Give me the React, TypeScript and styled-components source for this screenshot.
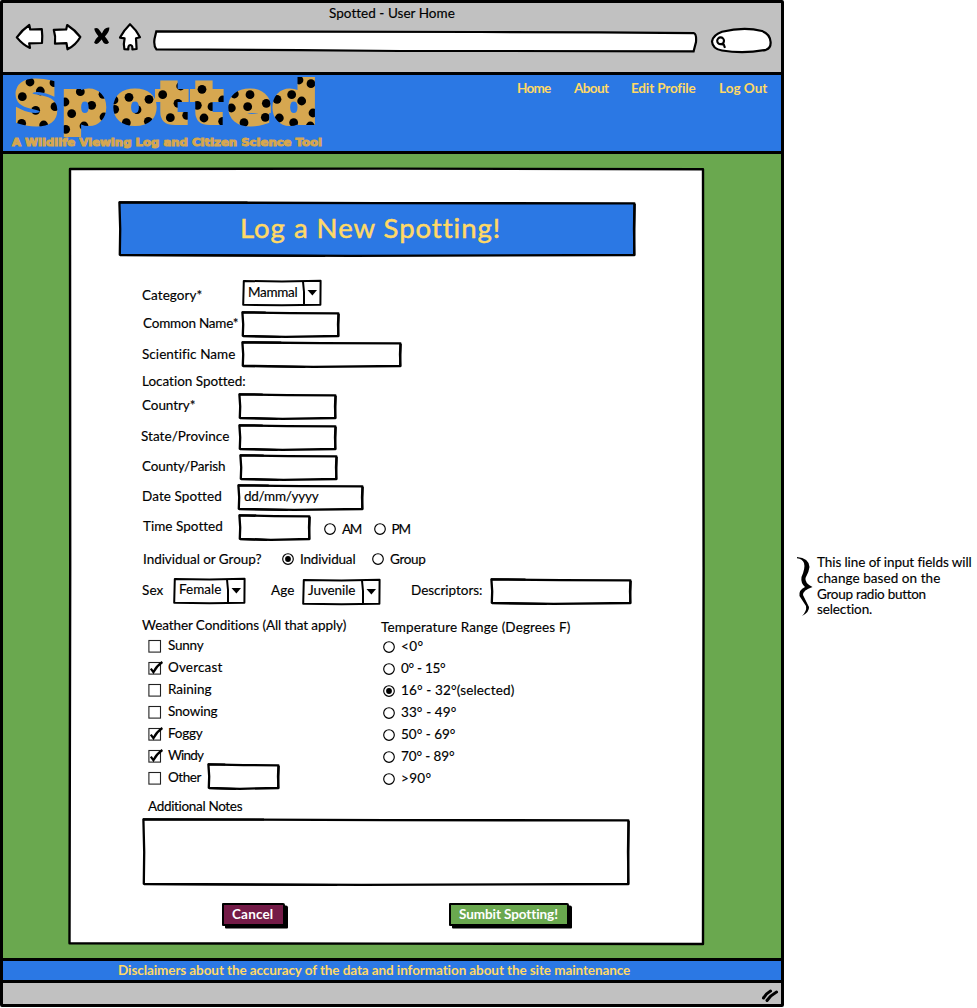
import React, { useLayoutEffect, useRef, useState } from "react";
import styled, { createGlobalStyle } from "styled-components";

const BLUE = "#2b78e4";
const GREEN = "#6aa84f";
const GREY = "#c1c1c1";
const YELLOW = "#ffd966";
const GOLD = "#d6a750";
const PLUM = "#741b47";

const GlobalStyle = createGlobalStyle`
  * { box-sizing: border-box; }
  body {
    margin: 0;
    background: #fff;
    color: #000;
    font-family: Lato, "Open Sans", sans-serif;
    font-size: 13.5px;
    line-height: 16px;
    overflow: hidden;
  }
`;

type Place = { $ml?: number; $mt?: number };

const TextBox = styled.div<Place & { $w: number; $size?: number; $bold?: boolean; $color?: string }>`
  position: relative;
  flex: none;
  width: ${(p) => p.$w}px;
  height: ${(p) => (p.$size ? p.$size * 1.2 : 16)}px;
  margin-left: ${(p) => p.$ml ?? 0}px;
  margin-top: ${(p) => p.$mt ?? 0}px;
  font-size: ${(p) => p.$size ?? 13.5}px;
  line-height: ${(p) => (p.$size ? p.$size * 1.2 - 2 : 14)}px;
  font-weight: ${(p) => (p.$bold ? 700 : 400)};
  color: ${(p) => p.$color ?? "#000"};
  white-space: nowrap;
  -webkit-text-stroke: ${(p) => (p.$bold ? 0 : p.$size ? 0.5 : 0.15)}px currentColor;
`;

type LabelProps = {
  children: string;
  w: number;
  ml?: number;
  mt?: number;
  size?: number;
  bold?: boolean;
  color?: string;
};

/* A line of text whose tracking is adjusted so that it fills a box `w` pixels wide. */
function Label({ children, w, ml, mt, size, bold, color }: LabelProps) {
  const ref = useRef<HTMLSpanElement>(null);
  const [spacing, setSpacing] = useState(0);
  useLayoutEffect(() => {
    const el = ref.current;
    if (!el) return;
    el.style.letterSpacing = "0px";
    const natural = el.getBoundingClientRect().width;
    const next = (w - 0.6 - natural) / Math.max(1, children.length);
    el.style.letterSpacing = `${next}px`;
    setSpacing(next);
  }, [children, w, size, bold]);
  return (
    <TextBox $w={w} $ml={ml} $mt={mt} $size={size} $bold={bold} $color={color}>
      <span ref={ref} style={{ letterSpacing: spacing }}>{children}</span>
    </TextBox>
  );
}

const Frame = styled.div<Place & { $w: number; $h: number }>`
  position: relative;
  flex: none;
  display: flex;
  align-items: flex-start;
  width: ${(p) => p.$w}px;
  height: ${(p) => p.$h}px;
  margin-left: ${(p) => p.$ml ?? 0}px;
  margin-top: ${(p) => p.$mt ?? 0}px;
`;

const Outline = styled.svg`
  position: absolute;
  inset: 0;
  overflow: visible;
`;

type BoxProps = { w: number; h?: number; ml?: number; mt?: number; fill?: string; children?: React.ReactNode };

/* Hand drawn rectangle used for text inputs. */
function Field({ w, h = 27, ml, mt, fill = "#fff", children }: BoxProps) {
  return (
    <Frame $w={w} $h={h} $ml={ml} $mt={mt}>
      <Outline width={w} height={h}>
        <path
          d={`M1.4 1.4 L${w * 0.5} 2.1 L${w - 1.6} 2.4 L${w - 2} ${h * 0.5} L${w - 1.5} ${h - 2} L${w * 0.45} ${h - 1.2} L1.8 ${h - 2.2} L2.2 ${h * 0.5} Z`}
          fill={fill}
          stroke="#000"
          strokeWidth="2.3"
          strokeLinejoin="round"
        />
        <path d={`M1 1.2 L${w * 0.25} 1.4 M2 ${h - 1.8} L${w * 0.4} ${h - 1} M${w - 1.2} 3 L${w - 2} ${h - 1}`} fill="none" stroke="#000" strokeWidth="2" />
      </Outline>
      {children}
    </Frame>
  );
}

function Select({ w, ml, mt, text, tw }: { w: number; ml?: number; mt?: number; text: string; tw: number }) {
  const h = 27;
  return (
    <Frame $w={w} $h={h} $ml={ml} $mt={mt}>
      <Outline width={w} height={h}>
        <path d={`M1.8 1.0 L${w * 0.5} 1.4 L${w - 1.4} 0.8 L${w - 1.6} ${h - 2.2} L${w * 0.5} ${h - 1.8} L1.2 ${h - 2.2} Z`} fill="#fff" stroke="#000" strokeWidth="2" strokeLinejoin="round" />
        <path d={`M${w - 19} 1.5 L${w - 18} 12 L${w - 18} ${h - 2}`} fill="none" stroke="#000" strokeWidth="2" />
        <path d={`M${w - 14.5} 10 L${w - 5} 10 L${w - 9.6} 15.5 Z`} fill="#000" />
      </Outline>
      <Label w={tw} ml={6} mt={4.5}>{text}</Label>
    </Frame>
  );
}

const Glyph = styled.svg<Place>`
  display: block;
  flex: none;
  overflow: visible;
  margin-left: ${(p) => p.$ml ?? 0}px;
  margin-top: ${(p) => p.$mt ?? 0}px;
`;

function Radio({ on, ml, mt }: { on?: boolean; ml?: number; mt?: number }) {
  return (
    <Glyph width="12" height="12" $ml={ml} $mt={mt}>
      <circle cx="6" cy="6" r="5.3" fill="#fff" stroke="#000" strokeWidth="1.15" />
      {on && <circle cx="6" cy="6" r="2.9" fill="#000" />}
    </Glyph>
  );
}

function Check({ on, ml, mt }: { on?: boolean; ml?: number; mt?: number }) {
  return (
    <Glyph width="13" height="13" $ml={ml} $mt={mt}>
      <rect x="0.9" y="0.5" width="11.6" height="11.6" fill="#fff" stroke="#222" strokeWidth="1.1" />
      {on && <path d="M2.8 6.6 L5.4 10.2 Q8.6 3.8 14.4 0" fill="none" stroke="#000" strokeWidth="2.2" />}
    </Glyph>
  );
}

const Stage = styled.div`
  display: flex;
  align-items: flex-start;
  width: 977px;
  height: 1008px;
`;

const Browser = styled.div`
  flex: none;
  display: flex;
  flex-direction: column;
  width: 784px;
  height: 1007px;
  border: solid #000;
  border-width: 3px;
  border-radius: 2px;
  background: ${GREY};
`;

const Chrome = styled.header`
  height: 69px;
`;

const TitleLine = styled.div`
  display: flex;
  height: 18px;
  padding: 3px 0 0 326px;
`;

const Toolbar = styled.div`
  display: flex;
  align-items: flex-start;
  height: 50px;
`;

const Banner = styled.div`
  display: flex;
  height: 82px;
  border: solid #000;
  border-width: 3px 0;
  background: ${BLUE};
`;

const Nav = styled.nav`
  display: flex;
  padding-top: 6px;
`;

const Content = styled.main`
  flex: none;
  height: 804px;
  padding: 13px 0 0 65px;
  background: ${GREEN};
`;

const FormBody = styled.form`
  position: relative;
  display: flex;
  flex-direction: column;
  width: 637px;
  height: 778px;
`;

const Row = styled.div<{ $h: number; $pl?: number; $mt?: number }>`
  position: relative;
  flex: none;
  display: flex;
  align-items: flex-start;
  height: ${(p) => p.$h}px;
  margin-top: ${(p) => p.$mt ?? 0}px;
  padding-left: ${(p) => p.$pl ?? 74}px;
`;

const Columns = styled.div`
  position: relative;
  display: flex;
  align-items: flex-start;
  height: 182px;
  padding-left: 74px;
`;

const Column = styled.div<{ $w: number; $pt: number }>`
  flex: none;
  width: ${(p) => p.$w}px;
  padding-top: ${(p) => p.$pt}px;
`;

const Option = styled.div<{ $pl: number }>`
  display: flex;
  align-items: flex-start;
  height: 22px;
  padding-left: ${(p) => p.$pl}px;
`;

const Push = styled.button<Place & { $w: number; $fill: string }>`
  flex: none;
  display: flex;
  width: ${(p) => p.$w}px;
  height: 23px;
  margin: 0 0 0 ${(p) => p.$ml ?? 0}px;
  padding: 2px 0 0 8px;
  border: 2px solid #000;
  border-radius: 1px 2px 1px 1px;
  background: ${(p) => p.$fill};
  box-shadow: 3px 2.5px 0 #000;
  font-family: inherit;
  text-align: left;
`;

const Footer = styled.footer`
  height: 25px;
  padding: 2px 0 0 115px;
  border: solid #000;
  border-width: 3px 0;
  background: ${BLUE};
`;

const StatusBar = styled.div`
  display: flex;
  justify-content: flex-end;
  flex: 1;
  padding: 6px 3px 0 0;
`;

const Aside = styled.aside`
  display: flex;
  align-items: flex-start;
  padding: 556px 0 0 13px;
`;

const Note = styled.div`
  padding-left: 4px;
  margin-top: -1px;
`;

const SPOTS: [number, number][] = [
  [90, 246], [162, 248], [121, 273], [67, 290], [107, 331], [165, 320], [65, 370], [131, 375],
  [241, 275], [309, 283], [195, 306], [275, 316], [215, 341], [312, 351], [197, 388], [252, 378],
  [342, 300], [387, 292], [447, 298], [344, 328], [411, 329], [379, 368], [445, 364],
  [488, 284], [542, 258], [534, 310], [560, 346], [511, 353],
  [606, 268], [592, 316], [636, 320], [668, 364], [612, 354], [668, 300],
  [703, 282], [750, 284], [799, 310], [694, 324], [743, 320], [732, 368], [796, 352],
  [831, 298], [875, 284], [905, 303], [939, 339], [838, 354], [881, 368], [933, 251], [897, 240], [931, 378],
];

const STRETCH = 1.1;
const LETTER_X = [14.5, 62, 114, 157.5, 192.5, 229, 273].map((x) => (x / STRETCH).toFixed(2)).join(" ");

function Logo() {
  return (
    <Glyph width="330" height="76" viewBox="3 75 330 76">
      <defs>
        <pattern
          id="spots"
          patternUnits="userSpaceOnUse"
          x="0"
          y="0"
          width="340"
          height="160"
          patternTransform={`scale(${1 / STRETCH} 1)`}
        >
          <rect width="340" height="160" fill={GOLD} />
          {SPOTS.map(([x, y], i) => (
            <circle key={i} cx={x / 3} cy={y / 3} r="4.4" fill="#000" />
          ))}
        </pattern>
      </defs>
      <text
        x={LETTER_X}
        y="122.3"
        transform={`scale(${STRETCH} 1)`}
        fontFamily="DejaVu Sans, Inter, sans-serif"
        fontWeight="700"
        fontSize="55.5"
        fill="url(#spots)"
        stroke="url(#spots)"
        strokeWidth="6"
        strokeMiterlimit="2"
      >
        Spotted
      </text>
      <text
        x="12"
        y="146"
        textLength="310"
        lengthAdjust="spacingAndGlyphs"
        fontFamily="DejaVu Sans, Inter, sans-serif"
        fontWeight="700"
        fontSize="9.6"
        fill={GOLD}
        stroke={GOLD}
        strokeWidth="0.9"
      >
        A Wildlife Viewing Log and Citizen Science Tool
      </text>
    </Glyph>
  );
}

const WEATHER: { t: string; w: number; on?: boolean }[] = [
  { t: "Sunny", w: 36 },
  { t: "Overcast", w: 55, on: true },
  { t: "Raining", w: 44 },
  { t: "Snowing", w: 50 },
  { t: "Foggy", w: 35, on: true },
  { t: "Windy", w: 35.6, on: true },
  { t: "Other", w: 33.6 },
];

const TEMPS: { t: string; w: number; on?: boolean }[] = [
  { t: "<0°", w: 23 },
  { t: "0° - 15°", w: 45 },
  { t: "16° - 32°(selected)", w: 114, on: true },
  { t: "33° - 49°", w: 56 },
  { t: "50° - 69°", w: 55 },
  { t: "70° - 89°", w: 54 },
  { t: ">90°", w: 31 },
];

export default function App() {
  return (
    <>
      <GlobalStyle />
      <Stage>
        <Browser>
          <Chrome>
            <TitleLine>
              <Label w={126}>Spotted - User Home</Label>
            </TitleLine>
            <Toolbar>
              <Glyph width="139" height="30" viewBox="3 21 139 30">
                <g fill="#fff" stroke="#000" strokeWidth="2.2" strokeLinejoin="round" strokeLinecap="round">
                  <path d="M16.8 37.4 Q22 30 29.3 25 L30.2 29.5 L41.8 29.2 Q42.6 36 42 43 L29.2 43.3 L30 48 Q23 45 16.8 37.4 Z" />
                  <path d="M53.8 29.8 L66.2 29.4 L67.2 25 Q75 30 80.3 37 Q76 45 67.5 49.3 L66.5 43.2 L55 43.6 Q55.8 36 53.8 29.8 Z" />
                  <path d="M130 24.2 Q136 29.5 140 37.3 L136 38.2 L136.6 49 L132.4 49.3 Q132.6 45 130.3 45 Q128 45 128.3 49.5 L124.4 49.2 Q123.2 44 124.6 38.4 L120 37.6 Q124 30 130 24.2 Z" />
                </g>
                <path d="M94.3 28.6 Q97.5 27 99.7 30.5 L101.9 33.6 Q104.5 26.5 109.4 27.5 Q109.4 32 104.9 36.4 Q107 38.5 109 42.6 Q106.5 45.5 103.5 42.8 L101.7 39.6 L98.5 43 Q95.5 45 94.1 42.6 Q94.8 39.3 98.4 36.2 Q94.5 32 94.3 28.6 Z" fill="#000" />
              </Glyph>
              <Glyph width="543" height="24" viewBox="153 29 543 24" $ml={11} $mt={8}>
                <path d="M156.3 31.3 L300 31.7 L480 32 L600 32.4 L694 33.2 Q696.6 34 696 42 L693.6 51.3 L500 51 L400 51 L300 50.2 L156.4 49.4 Q153.5 46 154.5 39 Z" fill="#fff" stroke="#000" strokeWidth="2.2" />
              </Glyph>
              <Glyph width="62" height="26" viewBox="710 28 62 26" $ml={14} $mt={7}>
                <path d="M712 41.5 Q713 35 722 31.8 Q744 26.5 762 31 Q770 34 770.6 42 Q771 48 766 49.8 Q744 54 722 50.5 Q712.5 49 712 41.5 Z" fill="#fff" stroke="#000" strokeWidth="2.2" />
                <path d="M723.5 44 L725 47.8 M724 40.8 A3.4 3.4 0 1 1 717.2 40.8 A3.4 3.4 0 1 1 724 40.8 M720 44 L724 44.6" fill="none" stroke="#000" strokeWidth="2.1" />
              </Glyph>
            </Toolbar>
          </Chrome>
          <Banner>
            <Logo />
            <Nav>
              <Label w={34} ml={184} bold color={YELLOW}>Home</Label>
              <Label w={35} ml={23} bold color={YELLOW}>About</Label>
              <Label w={65} ml={22} bold color={YELLOW}>Edit Profile</Label>
              <Label w={49} ml={23} bold color={YELLOW}>Log Out</Label>
            </Nav>
          </Banner>
          <Content>
            <FormBody>
              <Outline width="637" height="778">
                <path d="M2 2 L320 1.6 L635 2.2 L635.6 400 L635 777 L320 776.6 L1.5 776.2 L2.2 400 Z" fill="#fff" stroke="#000" strokeWidth="2.4" strokeLinejoin="round" />
              </Outline>
              <Row $h={56} $mt={34} $pl={50}>
                <Field w={518} h={56} fill={BLUE}>
                  <Label w={261} ml={122} mt={11} size={27.5} color={YELLOW}>Log a New Spotting!</Label>
                </Field>
              </Row>
              <Row $h={31} $mt={23}>
                <Label w={61} mt={8}>Category*</Label>
                <Select w={80} ml={39} text="Mammal" tw={50} />
              </Row>
              <Row $h={30}>
                <Label w={96} ml={1} mt={5}>Common Name*</Label>
                <Field w={99} ml={2} />
              </Row>
              <Row $h={30}>
                <Label w={94} mt={6}>Scientific Name</Label>
                <Field w={161} ml={5} />
              </Row>
              <Row $h={22}>
                <Label w={104} mt={3}>Location Spotted:</Label>
              </Row>
              <Row $h={31}>
                <Label w={54} mt={5}>Country*</Label>
                <Field w={99} ml={42} />
              </Row>
              <Row $h={30}>
                <Label w={89} ml={-1} mt={5}>State/Province</Label>
                <Field w={99} ml={8} />
              </Row>
              <Row $h={30}>
                <Label w={84} mt={5}>County/Parish</Label>
                <Field w={99} ml={13} />
              </Row>
              <Row $h={30}>
                <Label w={80} mt={5}>Date Spotted</Label>
                <Field w={127} ml={15}>
                  <Label w={75} ml={7} mt={5}>dd/mm/yyyy</Label>
                </Field>
              </Row>
              <Row $h={35}>
                <Label w={80} ml={1} mt={5}>Time Spotted</Label>
                <Field w={73} ml={15} />
                <Radio ml={13} mt={9} />
                <Label w={19.6} ml={6} mt={8}>AM</Label>
                <Radio ml={12} mt={9} />
                <Label w={19} ml={6} mt={8}>PM</Label>
              </Row>
              <Row $h={28}>
                <Label w={119} ml={1} mt={3}>Individual or Group?</Label>
                <Radio on ml={20} mt={4} />
                <Label w={56} ml={6} mt={3}>Individual</Label>
                <Radio ml={16} mt={4} />
                <Label w={36} ml={6} mt={3}>Group</Label>
              </Row>
              <Row $h={40}>
                <Label w={22} mt={6}>Sex</Label>
                <Select w={73} ml={9} text="Female" tw={43} mt={0.5} />
                <Label w={24} ml={25} mt={6}>Age</Label>
                <Select w={79} ml={7} mt={1.5} text="Juvenile" tw={48} />
                <Label w={72} ml={30} mt={6}>Descriptors:</Label>
                <Field w={142} ml={7} mt={1} />
              </Row>
              <Columns>
                <Column $w={239} $pt={1}>
                  <Label w={205}>Weather Conditions (All that apply)</Label>
                  <div>
                    {WEATHER.map((o) => (
                      <Option key={o.t} $pl={6}>
                        <Check on={o.on} mt={6} />
                        <Label w={o.w} ml={7} mt={4}>{o.t}</Label>
                        {o.t === "Other" && <Field w={73} ml={5.4} mt={-3} />}
                      </Option>
                    ))}
                  </div>
                </Column>
                <Column $w={200} $pt={3}>
                  <Label w={190}>Temperature Range (Degrees F)</Label>
                  {TEMPS.map((o) => (
                    <Option key={o.t} $pl={2}>
                      <Radio on={o.on} mt={4.6} />
                      <Label w={o.w} ml={6} mt={3}>{o.t}</Label>
                    </Option>
                  ))}
                </Column>
              </Columns>
              <Row $h={19} $pl={80}>
                <Label w={95}>Additional Notes</Label>
              </Row>
              <Row $h={85}>
                <Field w={488} h={68} />
              </Row>
              <Row $h={40} $pl={154}>
                <Push type="button" $w={63} $fill={PLUM}>
                  <Label w={42} bold color="#fff">Cancel</Label>
                </Push>
                <Push type="button" $w={120} $ml={164} $fill={GREEN}>
                  <Label w={99} bold color="#fff">Sumbit Spotting!</Label>
                </Push>
              </Row>
            </FormBody>
          </Content>
          <Footer>
            <Label w={513} bold color={YELLOW}>Disclaimers about the accuracy of the data and information about the site maintenance</Label>
          </Footer>
          <StatusBar>
            <Glyph width="16" height="14">
              <path d="M1.5 9 Q4 4.5 8.5 2 M5 11.5 Q9 6 14.5 3" fill="none" stroke="#000" strokeWidth="3" strokeLinecap="round" />
            </Glyph>
          </StatusBar>
        </Browser>
        <Aside>
          <Glyph width="16" height="62" viewBox="797 556 16 62">
            <path d="M797 557 Q809 558 809.5 567 Q809 572 805.5 578 Q804.5 583 812.5 587 Q803 590 803 595 L809 607 Q809.5 612 802 616 Q807 611 806 606 L799.5 596 Q798.5 590 805 587 Q800.5 583 801.5 577 Q805.5 568 804 563 Q802.5 559 797 558.2 Z" fill="#000" />
          </Glyph>
          <Note>
            <Label w={155}>This line of input fields will</Label>
            <Label w={124}>change based on the</Label>
            <Label w={109}>Group radio button</Label>
            <Label w={56} mt={-1}>selection.</Label>
          </Note>
        </Aside>
      </Stage>
    </>
  );
}
